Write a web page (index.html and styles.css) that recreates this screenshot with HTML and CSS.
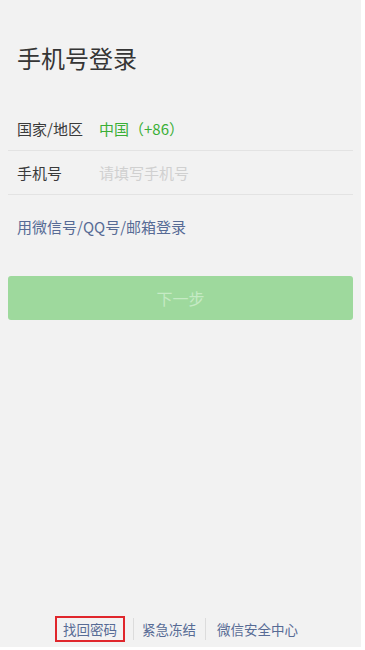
FILE: index.html
```html
<!DOCTYPE html>
<html lang="zh-CN">
<head>
    <meta charset="UTF-8">
    <meta name="viewport" content="width=device-width, initial-scale=1.0">
    <title>手机号登录</title>
    <link rel="stylesheet" href="styles.css">
</head>
<body>
    <div class="page">
        <h1 class="title">手机号登录</h1>

        <div class="form">
            <div class="form-row">
                <span class="label">国家/地区</span>
                <span class="country">中国（+86）</span>
            </div>
            <div class="form-row">
                <span class="label">手机号</span>
                <input type="tel" class="form-control" placeholder="请填写手机号">
            </div>
        </div>

        <a class="link other-login" href="#">用微信号/QQ号/邮箱登录</a>

        <button type="button" class="btn" disabled>下一步</button>

        <div class="footer">
            <a class="link footer-item active" href="#">找回密码</a>
            <span class="sep"></span>
            <a class="link footer-item" href="#">紧急冻结</a>
            <span class="sep"></span>
            <a class="link footer-item last" href="#">微信安全中心</a>
        </div>
    </div>
</body>
</html>
```

FILE: styles.css
```css
body {
    margin: 0;
    padding: 0;
    background: #fff;
    font-family: "Noto Sans CJK SC", "Liberation Sans", sans-serif;
    color: #333;
}

.page {
    width: 361px;
    height: 647px;
    background: #f2f2f2;
    display: flex;
    flex-direction: column;
    box-sizing: border-box;
    padding: 0 8px;
}

.title {
    font-size: 24px;
    font-weight: 400;
    line-height: 32px;
    margin: 42px 0 0 9px;
    color: #353535;
}

.form {
    margin-top: 33px;
}

.form-row {
    display: flex;
    align-items: center;
    height: 43px;
    padding-left: 9px;
    border-bottom: 1px solid #e3e3e3;
    font-size: 15px;
}

.label {
    width: 82px;
    color: #3a3a3a;
}

.country {
    color: #3aaf37;
}

.form-control {
    flex: 1;
    border: none;
    background: transparent;
    font: inherit;
    padding: 0;
    outline: none;
}

.form-control::placeholder {
    color: #d0d0d0;
}

.link {
    color: #576b95;
    text-decoration: none;
}

.other-login {
    font-size: 15px;
    line-height: 22px;
    margin: 21px 0 0 9px;
}

.btn {
    margin-top: 38px;
    height: 44px;
    width: 345px;
    border: none;
    border-radius: 3px;
    background: #9ed99d;
    color: #c5eac4;
    font-family: inherit;
    font-size: 16px;
}

.footer {
    margin-top: auto;
    margin-bottom: 5px;
    display: flex;
    align-items: center;
    height: 26px;
    font-size: 13.5px;
    padding-left: 47px;
}

.footer-item {
    padding: 0 9px 0 8px;
    line-height: 22px;
}

.footer-item.active {
    border: 2px solid #e0262c;
    padding: 0 6px;
    margin-right: 8px;
}

.footer-item.last {
    padding-left: 11px;
}

.sep {
    width: 1px;
    height: 22px;
    background: #dcdcdc;
}
```
